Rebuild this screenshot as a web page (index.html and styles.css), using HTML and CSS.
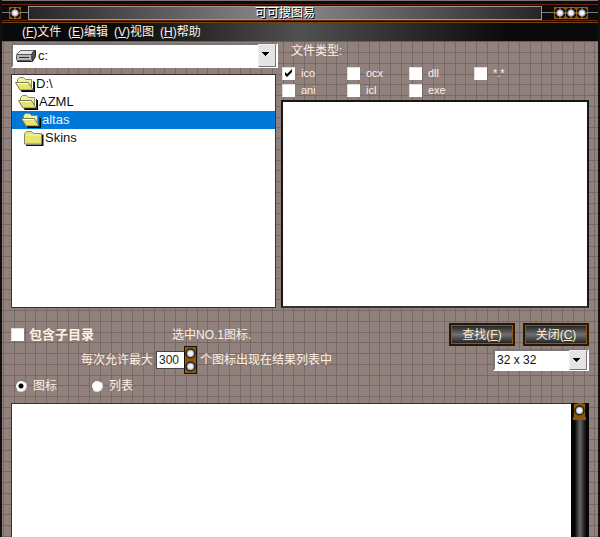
FILE: index.html
```html
<!DOCTYPE html>
<html lang="zh-CN">
  <head>
    <meta charset="UTF-8" />
    <meta name="viewport" content="width=device-width, initial-scale=1.0" />
    <title>可可搜图易</title>
    <link rel="stylesheet" href="styles.css">
  </head>
  <body>
    <!-- shared icons -->
    <svg class="sprite" aria-hidden="true">
      <defs>
        <radialGradient id="pearl">
          <stop offset="0" stop-color="#fff" />
          <stop offset="0.55" stop-color="#e8e8f2" />
          <stop offset="1" stop-color="#6c6c78" />
        </radialGradient>
      </defs>
      <symbol id="gem" viewBox="0 0 12 12">
        <rect width="12" height="12" fill="#8a5a0c" />
        <path d="M3 1h6l2 2v6l-2 2H3L1 9V3z" fill="#120c04" />
        <path d="M6 0v12M0 6h12" stroke="#a89468" />
        <circle cx="6" cy="6" r="3.8" fill="url(#pearl)" />
      </symbol>
      <symbol id="bead" viewBox="0 0 13 13">
        <rect width="13" height="13" fill="#1a0f02" />
        <rect x="1" y="0" width="11" height="13" fill="#8a5a0c" />
        <circle cx="6.5" cy="6.5" r="5" fill="#0c0804" />
        <circle cx="6.5" cy="6.5" r="4" fill="url(#pearl)" />
      </symbol>
      <symbol id="folder-open" viewBox="0 0 20 16">
        <path d="M6 15h13V6h1v10H7z" fill="#000" />
        <path d="M2.5 6V3.5l2-2h4l2 2h6V12h-11z" fill="#f1f1a0" stroke="#8a8a70" />
        <path d="M.5 6.500h13l4.500 7.500H5z" fill="#e6e46c" stroke="#77775c" />
        <path d="M2 7.500h11" stroke="#fff" />
        <path d="M18.500 5v9.500H6" stroke="#222" fill="none" />
      </symbol>
      <symbol id="folder" viewBox="0 0 20 16">
        <path d="M2 15.500h16.500V4.500" stroke="#111" stroke-width="2" fill="none" />
        <path d="M.5 14V3.500l2-2h5l2 2h8V14z" fill="#e6e46c" stroke="#88886a" />
        <path d="M2 5h15" stroke="#f8f8c4" />
      </symbol>
      <symbol id="drive" viewBox="0 0 20 12">
        <path d="M.5 4.500l4-4h14l-3 4z" fill="#e4e8e8" stroke="#666" />
        <path d="M15.500 4.500l3-4h1v6l-3 5z" fill="#555" stroke="#222" />
        <rect x=".5" y="4.500" width="15" height="6" rx="1" fill="#b4b8b8" stroke="#555" />
        <path d="M3 7.500h10" stroke="#333" />
        <path d="M1 11.500h15" stroke="#222" />
      </symbol>
    </svg>

    <div class="window">
      <header class="titleBar">
        <svg class="gem"><use href="#gem" /></svg>
        <h1 class="title">可可搜图易</h1>
        <div class="windowButtons">
          <button class="gemButton" aria-label="最小化"><svg class="gem"><use href="#gem" /></svg></button>
          <button class="gemButton" aria-label="最大化"><svg class="gem"><use href="#gem" /></svg></button>
          <button class="gemButton" aria-label="关闭"><svg class="gem"><use href="#gem" /></svg></button>
        </div>
      </header>

      <nav class="menuBar">
        <button class="menu">(<u>F</u>)文件</button>
        <button class="menu">(<u>E</u>)编辑</button>
        <button class="menu">(<u>V</u>)视图</button>
        <button class="menu">(<u>H</u>)帮助</button>
      </nav>

      <main class="content">
        <section class="browser">
          <div class="source">
            <div class="combo driveCombo">
              <svg class="driveIcon"><use href="#drive" /></svg>
              <select class="select" aria-label="驱动器">
                <option>c:</option>
              </select>
            </div>
            <ul class="folders">
              <li><button class="folder"><svg class="folderIcon"><use href="#folder-open" /></svg>D:\</button></li>
              <li><button class="folder level1"><svg class="folderIcon"><use href="#folder-open" /></svg>AZML</button></li>
              <li><button class="folder level2 selected"><svg class="folderIcon"><use href="#folder-open" /></svg>altas</button></li>
              <li><button class="folder level3"><svg class="folderIcon"><use href="#folder" /></svg>Skins</button></li>
            </ul>
          </div>

          <div class="files">
            <fieldset class="types">
              <legend class="legend">文件类型:</legend>
              <div class="typeGrid">
                <label class="check"><input type="checkbox" class="box" checked>ico</label>
                <label class="check"><input type="checkbox" class="box">ocx</label>
                <label class="check"><input type="checkbox" class="box">dll</label>
                <label class="check"><input type="checkbox" class="box">*.*</label>
                <label class="check"><input type="checkbox" class="box">ani</label>
                <label class="check"><input type="checkbox" class="box">icl</label>
                <label class="check"><input type="checkbox" class="box">exe</label>
              </div>
            </fieldset>
            <div class="fileList"></div>
          </div>
        </section>

        <section class="options">
          <div class="settings">
            <div class="settingRow">
              <label class="check subfolders"><input type="checkbox" class="box">包含子目录</label>
              <span class="status">选中NO.1图标.</span>
            </div>
            <div class="settingRow limit">
              <label for="limit">每次允许最大</label>
              <div class="spinner">
                <input id="limit" class="number" type="text" value="300">
                <div class="spinButtons">
                  <button class="spin" aria-label="增加"><svg class="bead"><use href="#bead" /></svg></button>
                  <button class="spin" aria-label="减少"><svg class="bead"><use href="#bead" /></svg></button>
                </div>
              </div>
              <span>个图标出现在结果列表中</span>
            </div>
            <div class="settingRow views">
              <label class="check"><input type="radio" name="view" class="radio" checked>图标</label>
              <label class="check"><input type="radio" name="view" class="radio">列表</label>
            </div>
          </div>
          <div class="actions">
            <div class="buttons">
              <button class="button">查找(<u>F</u>)</button>
              <button class="button">关闭(<u>C</u>)</button>
            </div>
            <div class="combo sizeCombo">
              <select class="select" aria-label="图标大小">
                <option>32 x 32</option>
              </select>
            </div>
          </div>
        </section>

        <section class="results">
          <div class="resultList"></div>
          <div class="scrollBar">
            <button class="spin" aria-label="向上滚动"><svg class="bead"><use href="#bead" /></svg></button>
          </div>
        </section>
      </main>
    </div>
  </body>
</html>
```
FILE: styles.css
```css
* {
  box-sizing: border-box;
}
body {
  margin: 0;
  font-family: "Liberation Sans", "Noto Sans CJK SC", sans-serif;
  font-size: 12px;
  line-height: 16px;
  color: #fff0e4;
}

button,
input,
select {
  font: inherit;
  color: inherit;
  margin: 0;
  padding: 0;
}

button {
  border: 0;
  background: none;
}

.sprite {
  position: absolute;
  width: 0;
  height: 0;
}

.window {
  --line: #796966;
  display: flex;
  flex-direction: column;
  height: 100vh;
  overflow: hidden;
  border-left: 2px solid #111;
  border-right: 2px solid #111;
  background-color: #91817d;
  /* four lines for every 43px in both directions */
  background-image:
    linear-gradient(90deg, var(--line) 1px, transparent 1px),
    linear-gradient(90deg, var(--line) 1px, transparent 1px),
    linear-gradient(90deg, var(--line) 1px, transparent 1px),
    linear-gradient(90deg, var(--line) 1px, transparent 1px),
    linear-gradient(var(--line) 1px, transparent 1px),
    linear-gradient(var(--line) 1px, transparent 1px),
    linear-gradient(var(--line) 1px, transparent 1px),
    linear-gradient(var(--line) 1px, transparent 1px);
  background-size: 43px 43px;
  background-position: 1px 0, 12px 0, 23px 0, 33px 0, 0 9px, 0 20px, 0 31px, 0 41px;
}

/* title bar */
.titleBar {
  display: flex;
  align-items: center;
  height: 23px;
  padding: 2px 11px 0 7px;
  border-bottom: 1px solid #6b4a10;
  background:
    linear-gradient(#7c7c7c, #7c7c7c) 0 11px / 100% 1px no-repeat,
    linear-gradient(#6d2010, #6d2010) 0 3px / 100% 1px no-repeat,
    linear-gradient(#6d2010, #6d2010) 0 19px / 100% 1px no-repeat,
    #0c0c0c;
  border-top: 1px solid #777;
}

.title {
  flex: 1;
  height: 14px;
  margin: 0 12px 0 7px;
  border: 1px solid #999;
  background: linear-gradient(90deg, #262626, #8c8c8c 50%, #262626);
  font-size: 12px;
  font-weight: normal;
  line-height: 12px;
  text-align: center;
  text-shadow: 1px 1px #000;
  color: #fff;
}

.windowButtons {
  display: flex;
}

.gem {
  display: block;
  width: 12px;
  height: 12px;
}

.gemButton {
  width: 11px;
}

/* menu */
.menuBar {
  display: flex;
  height: 19px;
  padding-left: 20px;
  border-bottom: 1px solid #80601c;
  background: linear-gradient(90deg, #0a0a0a 20%, #505050 50%, #0a0a0a 85%);
}

.menu {
  width: 46px;
  text-align: left;
  white-space: nowrap;
}

.content {
  display: flex;
  flex: 1;
  flex-direction: column;
  padding: 1px 9px 0;
}

/* folders and file types */
.browser {
  display: grid;
  grid-template-columns: 265fr 308fr;
  gap: 5px;
  height: 265px;
}

.source,
.files {
  display: flex;
  flex-direction: column;
}

.combo {
  display: flex;
  align-items: center;
  border: 2px solid #fff;
  border-top-color: #777;
  border-left-color: #777;
  background-color: #fff;
  color: #111;
}

.select {
  flex: 1;
  height: 100%;
  border: 0;
  border-radius: 0;
  appearance: none;
  outline: none;
  background: transparent;
}

.combo::after {
  content: "";
  width: 16px;
  height: 100%;
  border: 1px solid #777;
  border-top-color: #eee;
  border-left-color: #eee;
  background: #e4e4e4;
  background-image: linear-gradient(#000, #000), linear-gradient(#000, #000), linear-gradient(#000, #000), linear-gradient(#000, #000);
  background-size: 7px 1px, 5px 1px, 3px 1px, 1px 1px;
  background-position: 3px 7px, 4px 8px, 5px 9px, 6px 10px;
  background-repeat: no-repeat;
  pointer-events: none;
}

.driveCombo {
  height: 25px;
  margin: 0 -2px 6px 0;
  padding-left: 3px;
  font-size: 13px;
}

.driveIcon {
  width: 20px;
  height: 12px;
  margin-right: 2px;
}

.folders {
  flex: 1;
  margin: 0;
  padding: 0;
  list-style: none;
  border: 1px solid #333;
  background: #fff;
  color: #111;
  font-size: 13px;
}

.folder {
  display: flex;
  align-items: center;
  gap: 1px;
  width: 100%;
  height: 18px;
  padding-left: 3px;
}

.level1 {
  padding-left: 6px;
}

.level2 {
  padding-left: 9px;
}

.level3 {
  padding-left: 12px;
}

.selected {
  background: #0078d7;
  color: #e8f6ff;
}

.folderIcon {
  width: 20px;
  height: 16px;
}

.types {
  height: 57px;
  min-width: 0;
  margin: 0;
  padding: 0;
  border: 0;
}

.legend {
  padding: 0 0 0 10px;
}

.typeGrid {
  display: grid;
  grid-template-columns: 65px 62px 65px 1fr;
  row-gap: 1px;
  padding: 6px 0 0 1px;
}

.check {
  display: flex;
  align-items: center;
  gap: 6px;
}

.typeGrid .check {
  font-size: 11px;
}

.box {
  appearance: none;
  width: 13px;
  height: 13px;
  border: 1px solid #fff;
  border-top-color: #ddd;
  border-left-color: #ddd;
  background: #fff;
}

.box:checked {
  background: #fff url("data:image/svg+xml,%3Csvg xmlns='http://www.w3.org/2000/svg' viewBox='0 0 11 11'%3E%3Cpath d='M2 4v3l2 2 5-5V1L4 6z'/%3E%3C/svg%3E") center / 11px 11px no-repeat;
}

.fileList {
  flex: 1;
  border: 2px solid #161616;
  border-bottom-color: #333;
  background: #fff;
}

/* search options */
.options {
  display: flex;
  justify-content: space-between;
  height: 95px;
  padding-top: 15px;
}

.settingRow {
  display: flex;
  align-items: center;
  height: 23px;
  white-space: nowrap;
}

.subfolders {
  gap: 5px;
  font-size: 13px;
  font-weight: bold;
}

.status {
  margin-left: 78px;
}

.limit {
  gap: 3px;
  height: 27px;
  padding-left: 70px;
}

.spinner {
  display: flex;
  align-items: center;
}

.number {
  width: 28px;
  height: 18px;
  padding-left: 2px;
  border: 1px solid #444;
  border-right: 0;
  border-radius: 0;
  background: #fff;
  color: #222;
}

.spinButtons {
  display: flex;
  flex-direction: column;
  border: 1px solid #1a0f02;
  border-width: 1px 0;
}

.spin {
  height: 13px;
}

.bead {
  display: block;
  width: 13px;
  height: 13px;
}

.views {
  gap: 34px;
  height: 26px;
  padding-left: 4px;
}

.radio {
  appearance: none;
  width: 12px;
  height: 12px;
  border: 1px solid #ddd;
  border-top-color: #777;
  border-left-color: #777;
  border-radius: 50%;
  background: #fff;
}

.radio:checked {
  background: radial-gradient(#000 2px, #fff 3px);
}

.actions {
  display: flex;
  flex-direction: column;
  align-items: flex-end;
  gap: 3px;
}

.buttons {
  display: flex;
  gap: 8px;
}

.button {
  width: 66px;
  height: 23px;
  border: 2px solid #2b1802;
  outline: 1px solid #8a5a14;
  outline-offset: -3px;
  background: linear-gradient(#1c1c1c, #707070 50%, #1c1c1c) padding-box;
  color: #fbeecb;
}

.sizeCombo {
  width: 96px;
  height: 22px;
  padding-left: 2px;
}

/* found icons */
.results {
  display: flex;
  flex: 1;
}

.resultList {
  flex: 1;
  border: 1px solid #333;
  border-right: 0;
  border-bottom: 0;
  background: #fff;
}

.scrollBar {
  width: 18px;
  padding: 1px 2px;
  background: linear-gradient(90deg, #050505 20%, #666 50%, #050505 85%);
}

.scrollBar .spin {
  height: 16px;
  border-bottom: 3px solid #8a5a0c;
}
```
